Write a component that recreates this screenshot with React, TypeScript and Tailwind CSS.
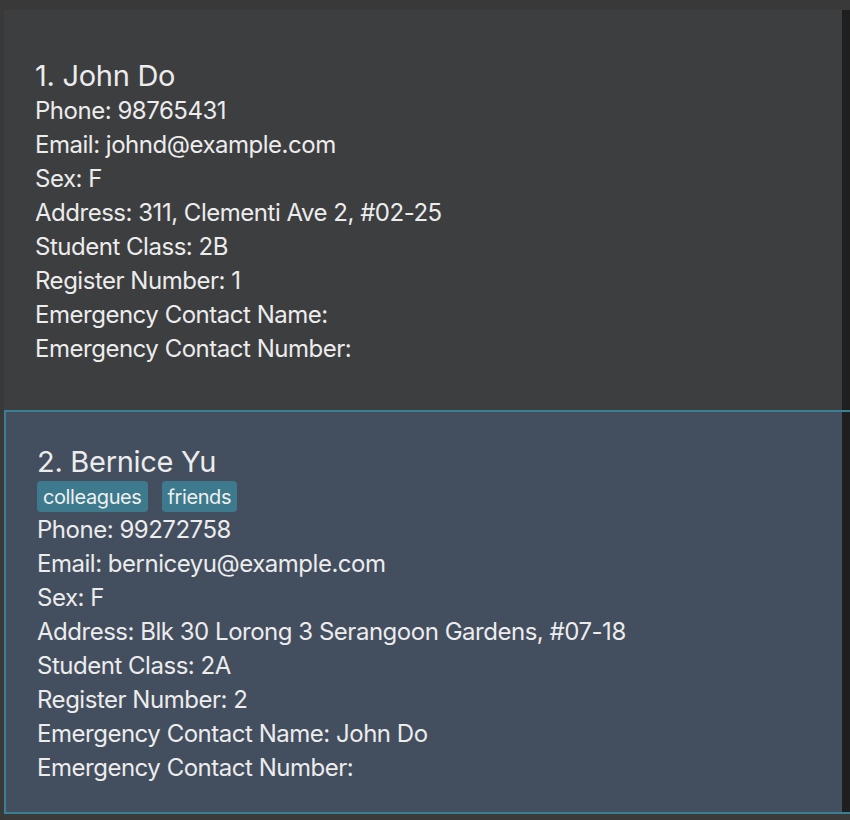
const people = [
  {
    index: 1,
    name: 'John Do',
    tags: [] as string[],
    phone: '98765431',
    email: 'johnd@example.com',
    sex: 'F',
    address: '311, Clementi Ave 2, #02-25',
    studentClass: '2B',
    registerNumber: '1',
    ecName: '',
    ecNumber: '',
  },
  {
    index: 2,
    name: 'Bernice Yu',
    tags: ['colleagues', 'friends'],
    phone: '99272758',
    email: 'berniceyu@example.com',
    sex: 'F',
    address: 'Blk 30 Lorong 3 Serangoon Gardens, #07-18',
    studentClass: '2A',
    registerNumber: '2',
    ecName: 'John Do',
    ecNumber: '',
  },
];

function PersonCard({ person }: { person: (typeof people)[number] }) {
  const fields = [
    `Phone: ${person.phone}`,
    `Email: ${person.email}`,
    `Sex: ${person.sex}`,
    `Address: ${person.address}`,
    `Student Class: ${person.studentClass}`,
    `Register Number: ${person.registerNumber}`,
    `Emergency Contact Name: ${person.ecName}`,
    `Emergency Contact Number: ${person.ecNumber}`,
  ];
  return (
    <div className="flex flex-col pl-[31px] text-[#ececec]">
      <div className="h-[37px] flex items-center text-[29px] leading-none tracking-[-0.01em]">
        {person.index}. {person.name}
      </div>
      {person.tags.length > 0 && (
        <div className="h-[33px] flex items-center gap-[14px]">
          {person.tags.map((t) => (
            <span
              key={t}
              className="h-[31px] px-[6px] flex items-center rounded-[4px] bg-[#3d7a8e] text-[20px] leading-none tracking-[-0.02em] text-[#f0f0f0]"
            >
              {t}
            </span>
          ))}
        </div>
      )}
      {fields.map((f) => (
        <div
          key={f}
          className="h-[34px] flex items-center text-[24px] leading-none tracking-[-0.02em] whitespace-pre"
        >
          {f}
        </div>
      ))}
    </div>
  );
}

export default function App() {
  return (
    <div
      className="w-[850px] h-[820px] overflow-hidden bg-[#393939] pt-[10px] pl-[4px]"
      style={{ fontFamily: 'Inter, "Noto Sans", sans-serif' }}
    >
      {/* first row */}
      <div className="flex h-[400px]">
        <div className="flex-1 bg-[#3d3e40] pt-[47px]">
          <PersonCard person={people[0]} />
        </div>
        <div className="w-[8px] bg-[#1f1f1f]"></div>
      </div>

      {/* selected row */}
      <div className="flex h-[404px] border-y-2 border-l-2 border-[#3b7f93]">
        <div className="flex-1 bg-[#434e5f] pt-[31px]">
          <PersonCard person={people[1]} />
        </div>
        <div className="w-[8px] bg-[#1f1f1f]"></div>
      </div>

      <div className="h-[6px] bg-[#3a3a3a]"></div>
    </div>
  );
}
